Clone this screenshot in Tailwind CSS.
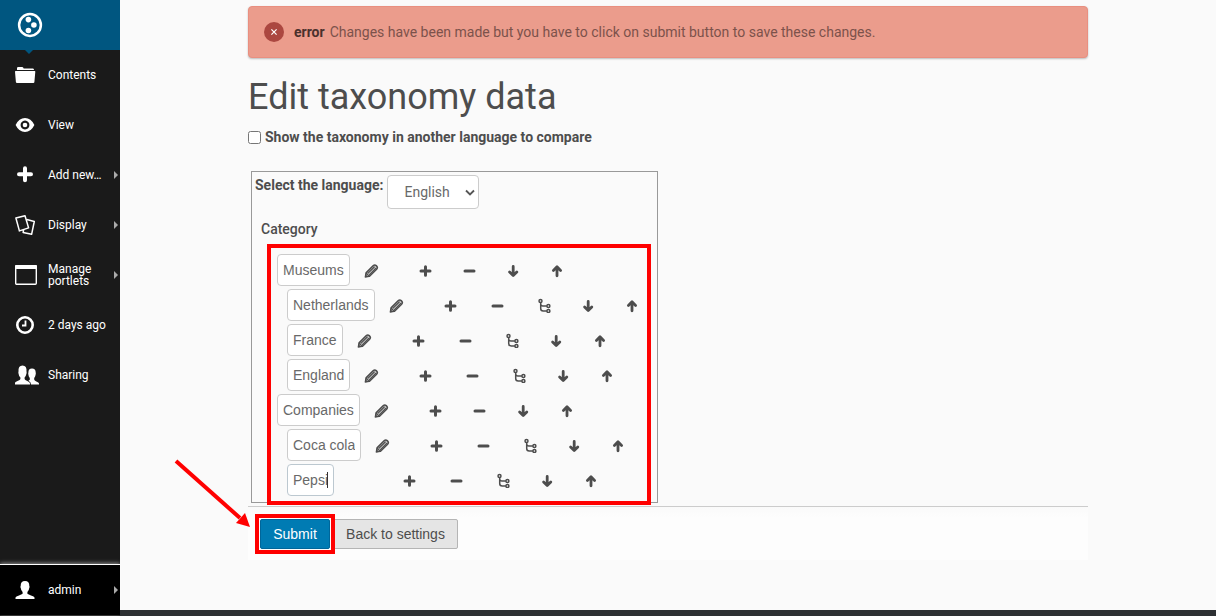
<!DOCTYPE html>
<html lang="en">
<head>
<meta charset="utf-8">
<meta name="viewport" content="width=device-width, initial-scale=1">
<title>Edit taxonomy data</title>
<script src="https://cdn.jsdelivr.net/npm/@tailwindcss/browser@4"></script>
</head>
<body class="flex min-h-screen bg-[#fafafa] font-[Roboto,sans-serif] text-sm text-[#4d4d4d]">
<svg class="hidden" aria-hidden="true">
  <symbol id="pencil" viewBox="-0.5 -1 16 16"><path fill="#4d4d4d" fill-opacity="0.25" stroke="currentColor" stroke-width="1.6" stroke-linejoin="round" d="M2 13.8 2.6 9.9 9.6 2.8Q11.2 1.4 12.7 2.6L13.3 3.2Q14.5 4.7 13.1 6.2L6 13.2Z"/><path fill="none" stroke="currentColor" stroke-width="1.1" stroke-linecap="round" d="M4.6 10.2 10.8 4M6 11.6 12.1 5.4M2.8 10.3 5.7 13.2"/><path fill="currentColor" d="M1.3 14.5 1.9 11.4 4.5 14Z"/></symbol>
  <symbol id="plus" viewBox="-0.5 -1 16 16"><path stroke="currentColor" stroke-width="3" stroke-linecap="round" d="M8 3.7V12.3M3.5 8H12.5"/></symbol>
  <symbol id="minus" viewBox="-0.5 -1 16 16"><path stroke="currentColor" stroke-width="3" stroke-linecap="round" d="M3.5 8H12.5"/></symbol>
  <symbol id="down" viewBox="-0.5 -1 16 16"><path fill="none" stroke="currentColor" stroke-width="2.8" stroke-linecap="round" stroke-linejoin="round" d="M7.7 3.4V12M4.1 8.9 7.7 12.5 11.3 8.9"/></symbol>
  <symbol id="up" viewBox="-0.5 -1 16 16"><path fill="none" stroke="currentColor" stroke-width="2.8" stroke-linecap="round" stroke-linejoin="round" d="M7.5 12.8V4.4M3.9 7.4 7.5 3.8 11.1 7.4"/></symbol>
  <symbol id="tree" viewBox="-0.5 -1 16 16"><g fill="none" stroke="currentColor" stroke-width="1.5"><circle cx="4" cy="3" r="1.5"/><circle cx="11.9" cy="7.9" r="1.5"/><circle cx="11.9" cy="13" r="1.5"/><path d="M4.2 4.5V10.5Q4.2 13 6.7 13H10.4M4.2 6Q4.4 7.9 6.4 7.9H10.4"/></g></symbol>
</svg>

<aside class="flex w-[120px] shrink-0 flex-col bg-[#1a1a1a] text-xs text-white">
  <a href="#" aria-label="Plone" class="relative block h-[50px] bg-[#005680] pt-[12px] pl-[17px]">
    <svg class="size-[26px]" viewBox="0 0 26 26"><circle cx="13" cy="13" r="10.9" fill="none" stroke="#fff" stroke-width="2.5"/><g fill="#fff"><circle cx="11.4" cy="7.6" r="2.8"/><circle cx="16.9" cy="13" r="2.8"/><circle cx="11.4" cy="18.5" r="2.8"/></g></svg>
    <svg class="absolute top-full left-[25px] h-1 w-2" viewBox="0 0 8 4"><path fill="#005680" d="M0 0H8L4 4Z"/></svg>
  </a>
  <nav aria-label="Toolbar">
    <ul>
      <li><a href="#" class="flex h-[50px] items-center pl-[14px]"><svg class="mr-[8px] size-[26px]" viewBox="0 0 26 26"><path fill="#fff" d="M3 8V6.2Q3 5 4.2 5H8.3Q9.3 5 9.7 6.5H19Q20 6.5 20 8ZM1.6 9H20.7Q21.4 9 21.3 9.8L20.4 20Q20.3 21 19.3 21H3Q2 21 1.9 20L1 9.7Q1 9 1.6 9Z"/></svg>Contents</a></li>
      <li><a href="#" class="flex h-[50px] items-center pl-[14px]"><svg class="mr-[8px] size-[26px]" viewBox="0 0 26 26"><path fill="#fff" fill-rule="evenodd" d="M1.6 13Q5 6 11 6T20.4 13Q17 20 11 20T1.6 13ZM11 8.6a4.4 4.4 0 1 0 .01 0Z"/><circle cx="11" cy="13" r="2.3" fill="#fff"/></svg>View</a></li>
      <li><a href="#" class="flex h-[50px] items-center pl-[14px]"><svg class="mr-[8px] size-[26px]" viewBox="0 0 26 26"><path stroke="#fff" stroke-width="4" stroke-linecap="round" d="M11 6.3V18.3M5 12.3H17"/></svg><span class="grow">Add new…</span><svg class="mr-[2px] h-2 w-1" viewBox="0 0 4 8"><path fill="#aaa" d="M0 0 4 4 0 8Z"/></svg></a></li>
      <li><a href="#" class="flex h-[50px] items-center pl-[14px]"><svg class="mr-[8px] size-[26px]" viewBox="0 0 26 26"><path fill="none" stroke="#fff" stroke-width="1.5" stroke-linejoin="round" d="M1.9 6 11 3.7 14.6 15.9 5.4 18.9ZM12.8 7.6 20.3 9.5 17.6 22.3 9.1 20.4 9.7 18"/></svg><span class="grow">Display</span><svg class="mr-[2px] h-2 w-1" viewBox="0 0 4 8"><path fill="#aaa" d="M0 0 4 4 0 8Z"/></svg></a></li>
      <li><a href="#" class="flex h-[50px] items-center pl-[14px]"><svg class="mr-[8px] size-[26px]" viewBox="0 0 26 26"><rect x="1.7" y="3.7" width="20.6" height="18.6" rx="1" fill="none" stroke="#fff" stroke-width="1.4"/><path fill="#fff" d="M1 4Q1 3 2 3H22Q23 3 23 4V7H1Z"/></svg><span class="grow leading-[12px]">Manage<br>portlets</span><svg class="mr-[2px] h-2 w-1" viewBox="0 0 4 8"><path fill="#aaa" d="M0 0 4 4 0 8Z"/></svg></a></li>
      <li><a href="#" class="flex h-[50px] items-center pl-[14px]"><svg class="mr-[8px] size-[26px]" viewBox="0 0 26 26"><circle cx="11" cy="13" r="7.7" fill="none" stroke="#fff" stroke-width="2.6"/><path fill="none" stroke="#fff" stroke-width="1.8" d="M11.5 8.5V13.5H8"/></svg>2 days ago</a></li>
      <li><a href="#" class="flex h-[50px] items-center pl-[14px]"><svg class="mr-[8px] size-[26px] overflow-visible" viewBox="0 0 26 26"><path fill="#fff" d="M1 22.5V20.8Q1 20 3.5 19 6.4 18 6.4 17V15.5Q4.8 14 4.5 11.5 4.2 10.5 4.5 9.5 4 3.5 8.5 3.5T12.5 9.5Q12.8 10.5 12.5 11.5 12 14 10.6 15.5V17Q10.8 18 13.3 19 16 20 16 21.5V22.5ZM17 22.5Q17 20 14.5 18.8L15.8 17.8V16Q14.6 14.6 14.4 12.7 14 11.5 14.4 10.5 14.3 6.6 18 6.6T21.7 10.5Q22 11.5 21.6 12.7 21.3 14.8 20.2 16V17.5Q20.3 18.6 22.3 19.4 25 20.4 25 21.5V22.5Z"/></svg>Sharing</a></li>
    </ul>
  </nav>
  <a href="#" class="mt-auto mb-px flex h-[51px] items-center border-t border-white bg-black pl-[14px] shadow-[0_-1px_4px_rgba(255,255,255,0.5)]"><svg class="mr-[8px] size-[26px]" viewBox="0 0 26 26"><path fill="#fff" d="M1.5 22V20.5Q1.7 19.3 5 18.4 8.6 17.3 8.6 16.5V15Q7 13.5 6.8 11.2 6 10 6.7 8.8 6.5 4 11 4T15.3 8.8Q16 10 15.2 11.2 15 13.5 13.4 15V16.5Q13.4 17.3 17 18.4 20.3 19.3 20.5 20.5V22Z"/></svg><span class="grow">admin</span><svg class="mr-[2px] h-2 w-1" viewBox="0 0 4 8"><path fill="#aaa" d="M0 0 4 4 0 8Z"/></svg></a>
</aside>

<div class="flex min-w-0 grow flex-col">
  <main class="mx-auto w-full max-w-[840px] grow pt-[6px]">
    <div role="alert" class="flex h-[52px] items-center rounded-sm border border-[#e98f80] bg-[#eb9c8c] px-[15px] shadow-[0_1px_2px_rgba(0,0,0,0.25)]">
      <svg class="mr-[10px] size-5" viewBox="0 0 20 20"><circle cx="10" cy="10" r="10" fill="#ab4740"/><path stroke="#fff" stroke-width="1.2" d="M7.4 7.4 12.6 12.6M12.6 7.4 7.4 12.6"/></svg>
      <strong class="mr-[5px] font-bold text-[#4a302c]">error</strong>
      <span class="text-[#7c524b]">Changes have been made but you have to click on submit button to save these changes.</span>
    </div>
    <h1 class="mt-[18px] text-[36px] leading-[42px] font-normal">Edit taxonomy data</h1>
    <div class="mt-[9px] flex h-5 items-center gap-1">
      <input id="compare" type="checkbox" class="size-[13px]">
      <label for="compare" class="font-bold">Show the taxonomy in another language to compare</label>
    </div>

    <form>
      <section class="mt-6 ml-[3px] w-[407px] border border-[#999] px-[3px] pt-[3px] pb-px">
        <div class="flex items-start gap-[4px]">
          <label for="lang" class="font-bold">Select the language:</label>
          <span class="relative">
            <select id="lang" class="h-[34px] w-[92px] appearance-none rounded-sm border border-[#ccc] bg-white pl-4 text-sm text-[#696969]"><option>English</option></select>
            <svg class="pointer-events-none absolute top-[14px] right-[4px] size-[10px]" viewBox="0 0 10 10"><path fill="none" stroke="#555" stroke-width="1.8" d="M1 1.5 5 5.5 9 1.5"/></svg>
          </span>
        </div>
        <div class="mt-[10px] ml-[6px] font-medium">Category</div>
        <div class="relative mt-[5px] ml-[12px] w-[384px] px-[10px] pt-[10px] pb-[5px]">
          <ul class="space-y-[3px] text-[#4d4d4d]">
            <li class="flex h-8 items-center">
              <input aria-label="Category name" value="Museums" class="h-8 w-[73px] rounded-sm border border-[#ccc] bg-white px-[5px] font-[Liberation_Sans,sans-serif] text-sm text-[#696969]">
              <button type="button" aria-label="Edit" class="mr-[38px] ml-[13px] size-4"><svg class="size-4"><use href="#pencil"/></svg></button>
              <span class="flex gap-[28px]"><button type="button" aria-label="Add" class="size-4"><svg class="size-4"><use href="#plus"/></svg></button><button type="button" aria-label="Remove" class="size-4"><svg class="size-4"><use href="#minus"/></svg></button><button type="button" aria-label="Move down" class="size-4"><svg class="size-4"><use href="#down"/></svg></button><button type="button" aria-label="Move up" class="size-4"><svg class="size-4"><use href="#up"/></svg></button></span>
            </li>
            <li class="flex h-8 items-center pl-[10px]">
              <input aria-label="Category name" value="Netherlands" class="h-8 w-[88px] rounded-sm border border-[#ccc] bg-white px-[5px] font-[Liberation_Sans,sans-serif] text-sm text-[#696969]">
              <button type="button" aria-label="Edit" class="mr-[38px] ml-[13px] size-4"><svg class="size-4"><use href="#pencil"/></svg></button>
              <span class="flex gap-[31px]"><button type="button" aria-label="Add" class="size-4"><svg class="size-4"><use href="#plus"/></svg></button><button type="button" aria-label="Remove" class="size-4"><svg class="size-4"><use href="#minus"/></svg></button><span class="flex gap-[28px]"><button type="button" aria-label="Add child" class="size-4"><svg class="size-4"><use href="#tree"/></svg></button><button type="button" aria-label="Move down" class="size-4"><svg class="size-4"><use href="#down"/></svg></button><button type="button" aria-label="Move up" class="size-4"><svg class="size-4"><use href="#up"/></svg></button></span></span>
            </li>
            <li class="flex h-8 items-center pl-[10px]">
              <input aria-label="Category name" value="France" class="h-8 w-[56px] rounded-sm border border-[#ccc] bg-white px-[5px] font-[Liberation_Sans,sans-serif] text-sm text-[#696969]">
              <button type="button" aria-label="Edit" class="mr-[38px] ml-[13px] size-4"><svg class="size-4"><use href="#pencil"/></svg></button>
              <span class="flex gap-[31px]"><button type="button" aria-label="Add" class="size-4"><svg class="size-4"><use href="#plus"/></svg></button><button type="button" aria-label="Remove" class="size-4"><svg class="size-4"><use href="#minus"/></svg></button><span class="flex gap-[28px]"><button type="button" aria-label="Add child" class="size-4"><svg class="size-4"><use href="#tree"/></svg></button><button type="button" aria-label="Move down" class="size-4"><svg class="size-4"><use href="#down"/></svg></button><button type="button" aria-label="Move up" class="size-4"><svg class="size-4"><use href="#up"/></svg></button></span></span>
            </li>
            <li class="flex h-8 items-center pl-[10px]">
              <input aria-label="Category name" value="England" class="h-8 w-[63px] rounded-sm border border-[#ccc] bg-white px-[5px] font-[Liberation_Sans,sans-serif] text-sm text-[#696969]">
              <button type="button" aria-label="Edit" class="mr-[38px] ml-[13px] size-4"><svg class="size-4"><use href="#pencil"/></svg></button>
              <span class="flex gap-[31px]"><button type="button" aria-label="Add" class="size-4"><svg class="size-4"><use href="#plus"/></svg></button><button type="button" aria-label="Remove" class="size-4"><svg class="size-4"><use href="#minus"/></svg></button><span class="flex gap-[28px]"><button type="button" aria-label="Add child" class="size-4"><svg class="size-4"><use href="#tree"/></svg></button><button type="button" aria-label="Move down" class="size-4"><svg class="size-4"><use href="#down"/></svg></button><button type="button" aria-label="Move up" class="size-4"><svg class="size-4"><use href="#up"/></svg></button></span></span>
            </li>
            <li class="flex h-8 items-center">
              <input aria-label="Category name" value="Companies" class="h-8 w-[83px] rounded-sm border border-[#ccc] bg-white px-[5px] font-[Liberation_Sans,sans-serif] text-sm text-[#696969]">
              <button type="button" aria-label="Edit" class="mr-[38px] ml-[13px] size-4"><svg class="size-4"><use href="#pencil"/></svg></button>
              <span class="flex gap-[28px]"><button type="button" aria-label="Add" class="size-4"><svg class="size-4"><use href="#plus"/></svg></button><button type="button" aria-label="Remove" class="size-4"><svg class="size-4"><use href="#minus"/></svg></button><button type="button" aria-label="Move down" class="size-4"><svg class="size-4"><use href="#down"/></svg></button><button type="button" aria-label="Move up" class="size-4"><svg class="size-4"><use href="#up"/></svg></button></span>
            </li>
            <li class="flex h-8 items-center pl-[10px]">
              <input aria-label="Category name" value="Coca cola" class="h-8 w-[74px] rounded-sm border border-[#ccc] bg-white px-[5px] font-[Liberation_Sans,sans-serif] text-sm text-[#696969]">
              <button type="button" aria-label="Edit" class="mr-[38px] ml-[13px] size-4"><svg class="size-4"><use href="#pencil"/></svg></button>
              <span class="flex gap-[31px]"><button type="button" aria-label="Add" class="size-4"><svg class="size-4"><use href="#plus"/></svg></button><button type="button" aria-label="Remove" class="size-4"><svg class="size-4"><use href="#minus"/></svg></button><span class="flex gap-[28px]"><button type="button" aria-label="Add child" class="size-4"><svg class="size-4"><use href="#tree"/></svg></button><button type="button" aria-label="Move down" class="size-4"><svg class="size-4"><use href="#down"/></svg></button><button type="button" aria-label="Move up" class="size-4"><svg class="size-4"><use href="#up"/></svg></button></span></span>
            </li>
            <li class="flex h-8 items-center pl-[10px]">
              <span class="relative flex">
                <input aria-label="Category name" value="Pepsi" class="h-8 w-[47px] rounded-sm border border-[#bcc8d0] bg-white px-[5px] font-[Liberation_Sans,sans-serif] text-sm text-[#696969]">
                <span class="absolute top-2 right-[6px] h-4 w-px bg-[#333]"></span>
              </span>
              <span class="mr-[38px] ml-[13px] size-4"></span>
              <span class="flex gap-[31px]"><button type="button" aria-label="Add" class="size-4"><svg class="size-4"><use href="#plus"/></svg></button><button type="button" aria-label="Remove" class="size-4"><svg class="size-4"><use href="#minus"/></svg></button><span class="flex gap-[28px]"><button type="button" aria-label="Add child" class="size-4"><svg class="size-4"><use href="#tree"/></svg></button><button type="button" aria-label="Move down" class="size-4"><svg class="size-4"><use href="#down"/></svg></button><button type="button" aria-label="Move up" class="size-4"><svg class="size-4"><use href="#up"/></svg></button></span></span>
            </li>
          </ul>
          <div class="pointer-events-none absolute inset-x-0 top-0 -bottom-1 z-10 border-4 border-[#f00]"></div>
        </div>
      </section>

      <div class="mt-[3px] flex h-[54px] items-start border-t border-[#ccc] bg-linear-to-b from-[#fafafa] to-[#fdfdfd] to-20% pt-[12px] pl-[12px]">
        <div class="relative">
          <button type="submit" class="h-[30px] w-[70px] rounded-xs border border-[#00669a] bg-[#007bb3] font-[Liberation_Sans,sans-serif] text-sm text-white">Submit</button>
          <div class="pointer-events-none absolute -inset-x-[5px] -inset-y-[5px] border-4 border-[#f00]"></div>
          <svg class="pointer-events-none absolute right-[80px] bottom-[19px] h-[72px] w-[76px]" viewBox="0 0 76 72"><path stroke="#f00" stroke-width="4" d="M2 3 66 60"/><path fill="#f00" d="M76 69 62 65 71 55Z"/></svg>
        </div>
        <button type="button" class="ml-[3px] h-[30px] w-[125px] rounded-xs border border-[#b5b5b5] bg-[#e5e5e5] font-[Liberation_Sans,sans-serif] text-sm text-[#4d4d4d]">Back to settings</button>
      </div>
    </form>
  </main>
  <footer class="h-[6px] bg-[#2e3133]"></footer>
</div>
</body>
</html>
